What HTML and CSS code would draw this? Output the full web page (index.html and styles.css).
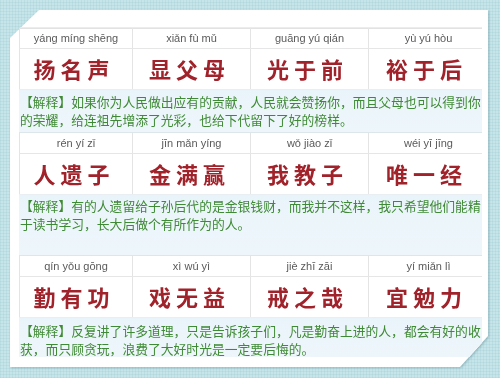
FILE: index.html
```html
<!DOCTYPE html>
<html lang="zh">
<head>
<meta charset="utf-8">
<title>扬名声 显父母</title>
<link rel="stylesheet" href="styles.css">
</head>
<body>
<div class="scene">
  <div class="frame">
    <div class="card">
      <div class="table">
        <div class="row pinyin">
          <div class="cell">yáng míng shēng</div>
          <div class="cell">xiǎn fù mǔ</div>
          <div class="cell">guāng yú qián</div>
          <div class="cell">yù yú hòu</div>
        </div>
        <div class="row hanzi">
          <div class="cell">扬名声</div>
          <div class="cell">显父母</div>
          <div class="cell">光于前</div>
          <div class="cell">裕于后</div>
        </div>
        <div class="explain ex1">
          <p class="text">【解释】如果你为人民做出应有的贡献，人民就会赞扬你，而且父母也可以得到你的荣耀，给连祖先增添了光彩，也给下代留下了好的榜样。</p>
        </div>

        <div class="row pinyin">
          <div class="cell">rén yí zǐ</div>
          <div class="cell">jīn mǎn yíng</div>
          <div class="cell">wǒ jiào zǐ</div>
          <div class="cell">wéi yī jīng</div>
        </div>
        <div class="row hanzi">
          <div class="cell">人遗子</div>
          <div class="cell">金满赢</div>
          <div class="cell">我教子</div>
          <div class="cell">唯一经</div>
        </div>
        <div class="explain ex2">
          <p class="text">【解释】有的人遗留给子孙后代的是金银钱财，而我并不这样，我只希望他们能精于读书学习，长大后做个有所作为的人。</p>
        </div>

        <div class="row pinyin">
          <div class="cell">qín yǒu gōng</div>
          <div class="cell">xì wú yì</div>
          <div class="cell">jiè zhī zāi</div>
          <div class="cell">yí miǎn lì</div>
        </div>
        <div class="row hanzi">
          <div class="cell">勤有功</div>
          <div class="cell">戏无益</div>
          <div class="cell">戒之哉</div>
          <div class="cell">宜勉力</div>
        </div>
        <div class="explain ex3">
          <p class="text">【解释】反复讲了许多道理，只是告诉孩子们，凡是勤奋上进的人，都会有好的收获，而只顾贪玩，浪费了大好时光是一定要后悔的。</p>
        </div>
      </div>
    </div>
  </div>
</div>
</body>
</html>
```

FILE: styles.css
```css
html, body {
  margin: 0;
  padding: 0;
}

body {
  width: 500px;
  height: 378px;
  overflow: hidden;
  background-color: #c6e5ea;
  background-image:
    repeating-linear-gradient(0deg, rgba(120, 180, 190, 0.14) 0 1px, transparent 1px 3px),
    repeating-linear-gradient(90deg, rgba(120, 180, 190, 0.14) 0 1px, transparent 1px 3px);
}

.scene {
  padding: 10px 0 0 10px;
}

.frame {
  width: 480px;
  filter: drop-shadow(1px 1px 1px rgba(60, 110, 120, 0.35));
}

.card {
  width: 478px;
  height: 357px;
  box-sizing: border-box;
  padding: 17px 0 0 9px;
  background: #ffffff;
  clip-path: polygon(29px 0, 100% 0, 100% calc(100% - 31px), calc(100% - 28px) 100%, 0 100%, 0 28px);
}

.table {
  width: 463px;
  height: 330px;
  overflow: hidden;
  background: #ffffff;
  box-shadow: inset 0 1px 0 #e2e2e2, inset 1px 0 0 #e6e6e6;
  border-top: 1px solid #ececec;
  box-sizing: border-box;
}

.row {
  display: grid;
  grid-template-columns: 113px 118px 118px 120px;
  width: 469px;
}

.cell {
  border-left: 1px solid #e4e4e4;
  display: flex;
  align-items: center;
  justify-content: center;
}

.pinyin {
  height: 21px;
  border-bottom: 1px solid #e6e6e6;
  font-family: "Liberation Sans", Arial, sans-serif;
  font-size: 11px;
  color: #5a5a5a;
  box-sizing: border-box;
}

.pinyin .cell {
  padding-bottom: 1px;
}

.hanzi {
  height: 40px;
  font-family: "Noto Sans CJK SC", sans-serif;
  font-weight: 700;
  font-size: 22px;
  letter-spacing: 5px;
  color: #a0222a;
}

.hanzi .cell {
  padding-right: 4px;
  padding-bottom: 3px;
}

.explain {
  background: linear-gradient(#e9f4fa, #eef6fb);
  border-top: 1px solid #e8eef2;
  border-bottom: 1px solid #dde6ea;
  box-sizing: border-box;
}

.ex1 {
  height: 44px;
  padding-top: 3px;
}

.ex2 {
  height: 62px;
  padding-top: 2px;
}

.ex3 {
  height: 42px;
  padding-top: 4px;
}

.text {
  margin: 0;
  width: 462px;
  padding-left: 1px;
  font-family: "Noto Sans CJK SC", sans-serif;
  font-size: 12.8px;
  line-height: 18px;
  color: #3f8a34;
}
```
